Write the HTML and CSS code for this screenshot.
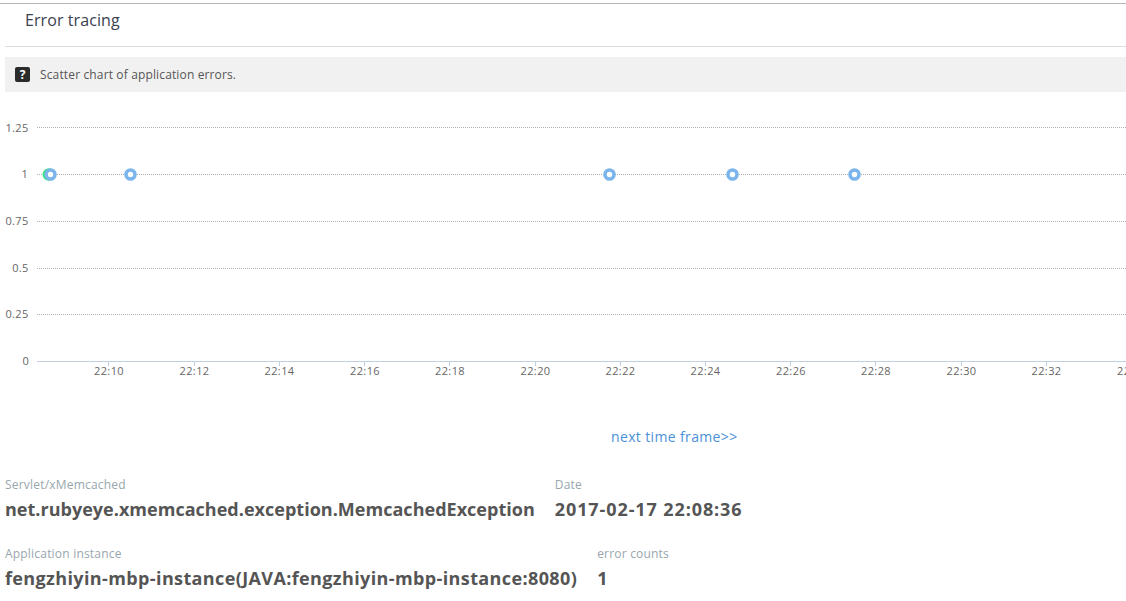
FILE: index.html
```html
<!DOCTYPE html>
<html lang="en">
<head>
<meta charset="utf-8">
<title>Error tracing</title>
<link rel="stylesheet" href="styles.css">
</head>
<body>
<div class="page">
  <h2 class="title">Error tracing</h2>
  <div class="hint">
    <span class="hint-icon">?</span>
    <span class="hint-text">Scatter chart of application errors.</span>
  </div>
  <svg class="chart" width="1121" height="300" viewBox="5 92 1121 300">
    <g class="grid">
      <line x1="37" x2="1126" y1="127.5" y2="127.5"/>
      <line x1="37" x2="1126" y1="174.5" y2="174.5"/>
      <line x1="37" x2="1126" y1="221.5" y2="221.5"/>
      <line x1="37" x2="1126" y1="268.5" y2="268.5"/>
      <line x1="37" x2="1126" y1="314.5" y2="314.5"/>
    </g>
    <line class="axis" x1="37" x2="1126" y1="361.5" y2="361.5"/>
    <g class="ticks">
      <line x1="108.5" x2="108.5" y1="361" y2="366"/>
      <line x1="194.5" x2="194.5" y1="361" y2="366"/>
      <line x1="279.5" x2="279.5" y1="361" y2="366"/>
      <line x1="364.5" x2="364.5" y1="361" y2="366"/>
      <line x1="449.5" x2="449.5" y1="361" y2="366"/>
      <line x1="535.5" x2="535.5" y1="361" y2="366"/>
      <line x1="620.5" x2="620.5" y1="361" y2="366"/>
      <line x1="705.5" x2="705.5" y1="361" y2="366"/>
      <line x1="790.5" x2="790.5" y1="361" y2="366"/>
      <line x1="875.5" x2="875.5" y1="361" y2="366"/>
      <line x1="961.5" x2="961.5" y1="361" y2="366"/>
      <line x1="1046.5" x2="1046.5" y1="361" y2="366"/>
    </g>
    <g class="ylabels">
      <text x="28.5" y="132">1.25</text>
      <text x="28" y="178">1</text>
      <text x="28.5" y="225">0.75</text>
      <text x="28.5" y="272">0.5</text>
      <text x="28.5" y="318">0.25</text>
      <text x="29" y="365">0</text>
    </g>
    <g class="xlabels">
      <text x="109" y="375">22:10</text>
      <text x="194.5" y="375">22:12</text>
      <text x="279.5" y="375">22:14</text>
      <text x="365" y="375">22:16</text>
      <text x="450" y="375">22:18</text>
      <text x="535.5" y="375">22:20</text>
      <text x="620.5" y="375">22:22</text>
      <text x="705.5" y="375">22:24</text>
      <text x="791" y="375">22:26</text>
      <text x="876" y="375">22:28</text>
      <text x="961.5" y="375">22:30</text>
      <text x="1046.5" y="375">22:32</text>
      <text x="1132" y="375">22:34</text>
    </g>
    <circle class="pt-green" cx="48.8" cy="174.5" r="6.2"/>
    <circle class="pt" cx="50.5" cy="174.5" r="4.5"/>
    <circle class="pt" cx="130.5" cy="174.5" r="4.5"/>
    <circle class="pt" cx="609.5" cy="174.5" r="4.5"/>
    <circle class="pt" cx="732.5" cy="174.5" r="4.5"/>
    <circle class="pt" cx="854.5" cy="174.5" r="4.5"/>
  </svg>
  <div class="pager"><a class="next" href="#">next time frame&gt;&gt;</a></div>
  <div class="stats">
    <div class="stat-row">
      <div class="stat">
        <div class="stat-label">Servlet/xMemcached</div>
        <div class="stat-value">net.rubyeye.xmemcached.exception.MemcachedException</div>
      </div>
      <div class="stat">
        <div class="stat-label">Date</div>
        <div class="stat-value stat-date">2017-02-17 22:08:36</div>
      </div>
    </div>
    <div class="stat-row">
      <div class="stat">
        <div class="stat-label">Application instance</div>
        <div class="stat-value stat-instance">fengzhiyin-mbp-instance(JAVA:fengzhiyin-mbp-instance:8080)</div>
      </div>
      <div class="stat">
        <div class="stat-label">error counts</div>
        <div class="stat-value">1</div>
      </div>
    </div>
  </div>
</div>
</body>
</html>
```

FILE: styles.css
```css
html, body {
  margin: 0;
  padding: 0;
  background: #fff;
  overflow: hidden;
}
body {
  height: 601px;
  font-family: "Open Sans", "Noto Sans", sans-serif;
  color: #333;
}
.page {
  border-top: 1px solid #b5b5b5;
  margin-top: 3px;
  padding-left: 5px;
  display: flex;
  flex-direction: column;
}
.title {
  margin: 0;
  height: 43px;
  box-sizing: border-box;
  padding: 5px 0 0 20px;
  border-bottom: 1px solid #ddd;
  font-size: 16px;
  font-weight: 400;
  line-height: 22px;
  letter-spacing: 0.08px;
  color: #3a3f51;
}
.hint {
  margin-top: 10px;
  height: 35px;
  background: #f1f1f1;
  display: flex;
  align-items: center;
  padding-left: 10px;
  gap: 10px;
}
.hint-text {
  font-size: 12px;
  letter-spacing: 0.14px;
  color: #555;
}
.hint-icon {
  width: 15px;
  height: 15px;
  border-radius: 2px;
  background: #2b2b2b;
  color: #fff;
  font-size: 12px;
  font-weight: 700;
  line-height: 15px;
  text-align: center;
}
.chart {
  display: block;
}
.grid line {
  stroke: #b0b0b0;
  stroke-width: 1;
  stroke-dasharray: 1 1;
}
.axis {
  stroke: #c0d0e0;
  stroke-width: 1;
}
.ticks line {
  stroke: #c0d0e0;
  stroke-width: 1;
}
.ylabels text {
  font-size: 11px;
  letter-spacing: 0.3px;
  fill: #666;
  text-anchor: end;
}
.xlabels text {
  font-size: 11px;
  letter-spacing: 0.4px;
  fill: #666;
  text-anchor: middle;
}
.pt {
  fill: #fff;
  stroke: #7cb5ec;
  stroke-width: 3.6;
}
.pt-green {
  fill: #2fe87a;
}
.pager {
  height: 84px;
  box-sizing: border-box;
  margin-left: -5px;
  padding: 34px 0 0 611px;
  line-height: 20px;
}
.next {
  font-size: 14px;
  letter-spacing: 0.36px;
  color: #4a90d9;
  text-decoration: none;
}
.stats {
  display: flex;
  flex-direction: column;
  gap: 21px;
}
.stat-row {
  display: flex;
  gap: 20px;
}
.stat-label {
  font-size: 12px;
  line-height: 17px;
  letter-spacing: 0.2px;
  color: #98a6ad;
}
.stat-value {
  margin-top: 1px;
  font-size: 18px;
  font-weight: 700;
  line-height: 30px;
  letter-spacing: 0.02px;
  color: #555;
  white-space: nowrap;
}
.stat-date {
  letter-spacing: 0.9px;
}
.stat-instance {
  letter-spacing: 0.38px;
}
```
